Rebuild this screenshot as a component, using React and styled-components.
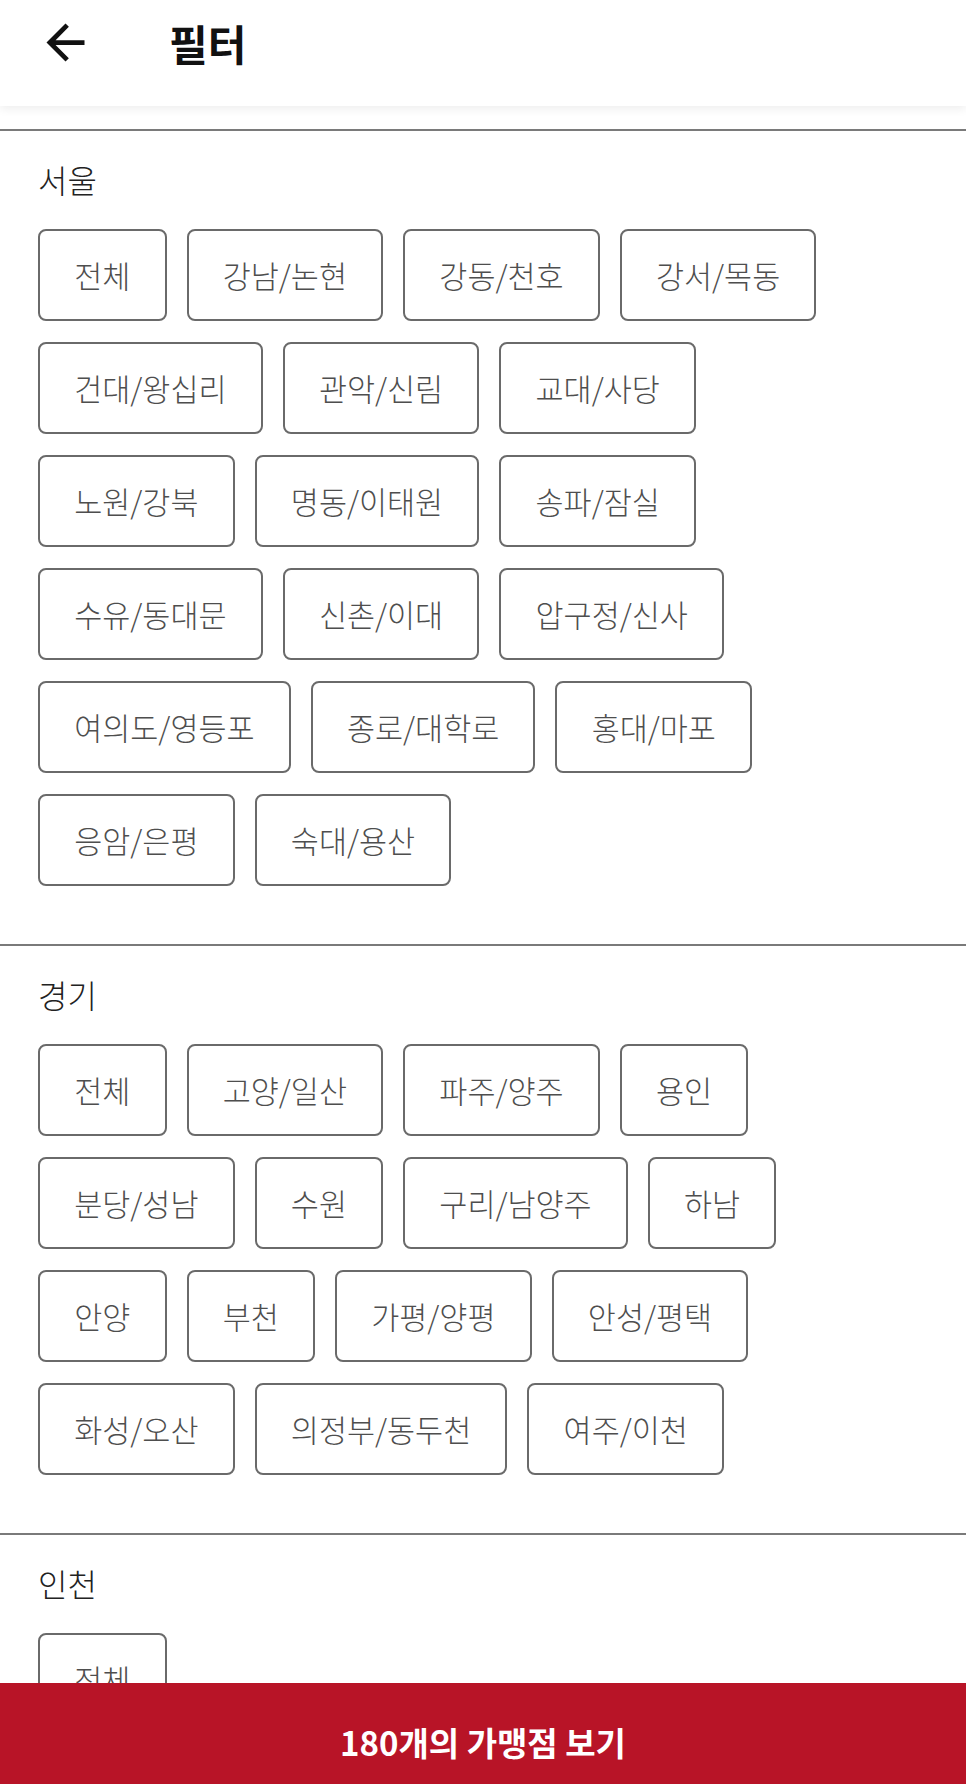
import styled, { createGlobalStyle } from 'styled-components'

const regions = [
  {
    name: '서울',
    areas: [
      '전체', '강남/논현', '강동/천호', '강서/목동', '건대/왕십리', '관악/신림',
      '교대/사당', '노원/강북', '명동/이태원', '송파/잠실', '수유/동대문', '신촌/이대',
      '압구정/신사', '여의도/영등포', '종로/대학로', '홍대/마포', '응암/은평', '숙대/용산',
    ],
  },
  {
    name: '경기',
    areas: [
      '전체', '고양/일산', '파주/양주', '용인', '분당/성남', '수원', '구리/남양주',
      '하남', '안양', '부천', '가평/양평', '안성/평택', '화성/오산', '의정부/동두천', '여주/이천',
    ],
  },
  {
    name: '인천',
    areas: ['전체'],
  },
]

const GlobalStyle = createGlobalStyle`
  html, body {
    margin: 0;
    padding: 0;
    background: #ffffff;
  }
  body {
    font-family: "Noto Sans CJK KR", "Noto Sans", sans-serif;
    color: #222222;
  }
`

const Page = styled.div`
  min-height: 100vh;
  background: #ffffff;
  padding-bottom: 101px;
`

const Header = styled.header`
  position: relative;
  z-index: 1;
  height: 106px;
  box-sizing: border-box;
  padding: 0 0 22px 37px;
  display: flex;
  align-items: center;
  background: #ffffff;
  box-shadow: 0 3px 9px rgba(0, 0, 0, 0.07);
`

const BackButton = styled.button`
  width: 57px;
  height: 57px;
  padding: 0;
  border: none;
  background: none;
  display: flex;
  cursor: pointer;
  margin-right: 75px;
`

const Title = styled.h1`
  margin: 0;
  font-size: 42px;
  font-weight: 700;
  line-height: 1;
  color: #111111;
  padding-top: 2px;
`

const Sections = styled.div`
  padding-top: 23px;
`

const Section = styled.section`
  border-top: 2px solid #7a7a7a;
  padding: 28px 0 58px 38px;
`

const RegionLabel = styled.div`
  font-size: 32px;
  font-weight: 300;
  line-height: 40px;
  color: #222222;
  margin-bottom: 30px;
`

const ChipList = styled.div`
  display: flex;
  flex-wrap: wrap;
  gap: 21px 20px;
  padding-right: 58px;
`

const Chip = styled.button`
  height: 92px;
  box-sizing: border-box;
  padding: 0 34.2px;
  display: inline-flex;
  align-items: center;
  justify-content: center;
  border: 2px solid #6a6a6a;
  border-radius: 8px;
  background: #ffffff;
  font-family: inherit;
  font-size: 30.5px;
  font-weight: 300;
  color: #4e4e4e;
  cursor: pointer;
`

const BottomBar = styled.button`
  position: fixed;
  left: 0;
  right: 0;
  bottom: 0;
  height: 101px;
  box-sizing: border-box;
  padding: 17px 0 0;
  border: none;
  background: #b81427;
  color: #ffffff;
  font-family: inherit;
  font-size: 33px;
  font-weight: 700;
  display: flex;
  align-items: center;
  justify-content: center;
  cursor: pointer;
`

function ArrowBack() {
  return (
    <svg width="57" height="57" viewBox="0 0 24 24" fill="#111111">
      <path d="M20 11H7.83l5.59-5.59L12 4l-8 8 8 8 1.41-1.41L7.83 13H20v-2z" />
    </svg>
  )
}

export default function App() {
  return (
    <Page>
      <GlobalStyle />
      <Header>
        <BackButton aria-label="뒤로">
          <ArrowBack />
        </BackButton>
        <Title>필터</Title>
      </Header>

      <Sections>
        {regions.map((region) => (
          <Section key={region.name}>
            <RegionLabel>{region.name}</RegionLabel>
            <ChipList>
              {region.areas.map((area) => (
                <Chip key={area}>{area}</Chip>
              ))}
            </ChipList>
          </Section>
        ))}
      </Sections>

      <BottomBar>180개의 가맹점 보기</BottomBar>
    </Page>
  )
}
